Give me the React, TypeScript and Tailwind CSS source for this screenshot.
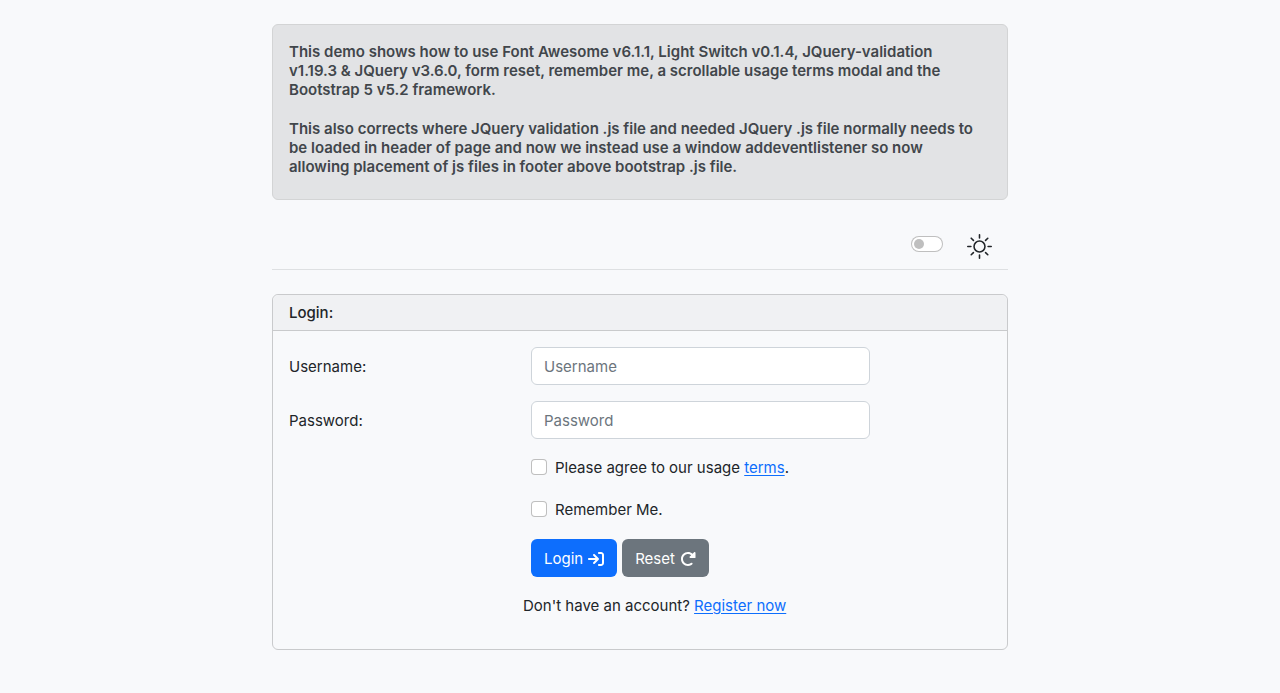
import { useState } from "react";
import { BsSun } from "react-icons/bs";

const check =
  "size-4 shrink-0 appearance-none rounded border border-black/25 bg-white checked:border-[#0d6efd] checked:bg-[#0d6efd]";
const field =
  "h-[38px] w-full rounded-md border border-[#ced4da] bg-white px-3 text-[#212529] placeholder:text-[#6c757d] outline-none focus:border-[#86b7fe]";
const link = "text-[#0d6efd] underline underline-offset-2";
const button = "flex h-[38px] items-center gap-[5px] rounded-md px-[13px] pt-px text-white";

function LoginIcon() {
  return (
    <svg viewBox="0 0 512 512" className="size-4" fill="currentColor" aria-hidden="true">
      <path d="M416 32h-64c-17.67 0-32 14.33-32 32s14.33 32 32 32h64c17.67 0 32 14.33 32 32v256c0 17.67-14.33 32-32 32h-64c-17.67 0-32 14.33-32 32s14.33 32 32 32h64c53.02 0 96-42.98 96-96V128C512 74.98 469 32 416 32zM342.6 233.4l-128-128c-12.51-12.51-32.76-12.49-45.25 0-12.5 12.5-12.5 32.75 0 45.25L242.8 224H32C14.31 224 0 238.3 0 256s14.31 32 32 32h210.8l-73.38 73.38c-12.5 12.5-12.5 32.75 0 45.25s32.75 12.5 45.25 0l128-128C355.1 266.1 355.1 245.9 342.6 233.4z" />
    </svg>
  );
}

function ResetIcon() {
  return (
    <svg viewBox="0 0 512 512" className="size-4" fill="currentColor" aria-hidden="true">
      <path d="M468.9 32.11c13.87 0 27.18 10.77 27.18 27.04v145.9c0 10.59-8.584 19.17-19.17 19.17h-145.7c-16.28 0-27.06-13.32-27.06-27.2 0-6.634 2.461-13.4 7.96-18.9l45.12-45.14c-28.22-23.14-63.85-36.64-101.3-36.64-88.09 0-159.8 71.69-159.8 159.8S167.8 415.9 255.9 415.9c73.14 0 89.44-38.31 115.1-38.31 18.48 0 31.97 15.04 31.97 31.96 0 35.04-81.59 70.41-147 70.41-123.4 0-223.9-100.5-223.9-223.9S132.6 32.44 256 32.44c54.6 0 106.2 20.39 146.4 55.26l47.6-47.63C455.5 34.57 462.3 32.11 468.9 32.11z" />
    </svg>
  );
}

export default function App() {
  const [dark, setDark] = useState(false);
  return (
    <div className="min-h-screen bg-[#f8f9fb] px-3 py-6 font-['Inter',sans-serif] text-[15px] leading-[26px] text-[#212529]">
      <main className="mx-auto max-w-[736px]">
        <section className="rounded-md border border-[#d3d4d5] bg-[#e2e3e5] px-4 pt-[17px] pb-[23px] leading-[1.28] font-semibold text-[#41464b]">
          <p>
            This demo shows how to use Font Awesome v6.1.1, Light Switch v0.1.4, JQuery-validation
            <br className="max-md:hidden" /> v1.19.3 &amp; JQuery v3.6.0, form reset, remember me, a
            scrollable usage terms modal and the
            <br className="max-md:hidden" /> Bootstrap 5 v5.2 framework.
          </p>
          <p className="mt-[19px]">
            This also corrects where JQuery validation .js file and needed JQuery .js file normally needs to
            <br className="max-md:hidden" /> be loaded in header of page and now we instead use a window
            addeventlistener so now
            <br className="max-md:hidden" /> allowing placement of js files in footer above bootstrap .js
            file.
          </p>
        </section>

        <div className="mt-6 flex h-[46px] items-center justify-end gap-6 border-b border-[#dee0e2] pr-4">
          <input
            type="checkbox"
            role="switch"
            aria-label="Light switch"
            checked={dark}
            onChange={() => setDark(!dark)}
            className="mb-1.5 h-4 w-8 appearance-none rounded-full border border-black/25 bg-white before:m-0.5 before:block before:size-[10px] before:rounded-full before:bg-[#bfbfbf] checked:before:ml-[18px]"
          />
          <BsSun className="size-[25px]" aria-hidden="true" />
        </div>

        <form className="mt-6 rounded-md border border-[#c9cacc]" onSubmit={(e) => e.preventDefault()}>
          <h1 className="flex h-9 items-center rounded-t-md border-b border-[#c9cacc] bg-[#f0f1f3] px-4 font-medium">
            Login:
          </h1>
          <div className="grid grid-cols-12 gap-x-6 px-4 pt-4 pb-[30px]">
            <label htmlFor="username" className="col-span-4 self-center pt-0.5">
              Username:
            </label>
            <div className="col-span-6">
              <input id="username" type="text" placeholder="Username" className={field} />
            </div>
            <label htmlFor="password" className="col-span-4 col-start-1 mt-4 self-center pt-0.5">
              Password:
            </label>
            <div className="col-span-6 mt-4">
              <input id="password" type="password" placeholder="Password" className={field} />
            </div>
            <div className="col-span-8 col-start-5 mt-4 flex items-start gap-2">
              <input id="agree" type="checkbox" className={check + " mt-1"} />
              <label htmlFor="agree">
                Please agree to our usage <a href="#terms" className={link}>terms</a>.
              </label>
            </div>
            <div className="col-span-8 col-start-5 mt-4 flex items-start gap-2">
              <input id="remember" type="checkbox" className={check + " mt-1"} />
              <label htmlFor="remember">Remember Me.</label>
            </div>
            <div className="col-span-8 col-start-5 mt-4 flex gap-[5px]">
              <button type="submit" className={button + " bg-[#0d6efd]"}>
                Login <LoginIcon />
              </button>
              <button type="reset" className={button + " bg-[#6c757d]"}>
                Reset <ResetIcon />
              </button>
            </div>
            <p className="col-span-8 col-start-5 mt-4 -ml-2">
              Don't have an account? <a href="#register" className={link}>Register now</a>
            </p>
          </div>
        </form>
      </main>
    </div>
  );
}
